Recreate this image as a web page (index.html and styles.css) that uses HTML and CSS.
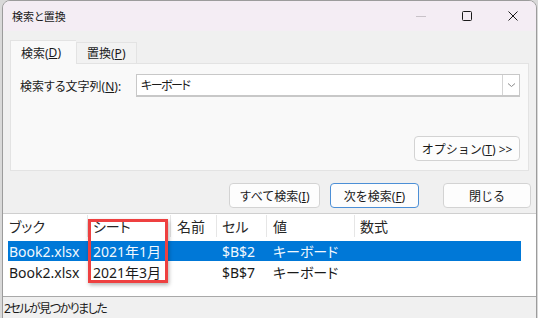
FILE: index.html
```html
<!DOCTYPE html>
<html lang="ja">

<head>
    <meta charset="UTF-8">
    <meta name="viewport" content="width=device-width, initial-scale=1.0">
    <title>検索と置換</title>
    <link rel="stylesheet" href="styles.css">
</head>

<body>

    <div class="window">
        <div class="titlebar">
            <span class="title">検索と置換</span>
            <div class="controls">
                <span class="ctl">
                    <svg width="12" height="12" viewBox="0 0 12 12"><path d="M1 6.5h10" stroke="#c8c2c8" stroke-width="1" fill="none"/></svg>
                </span>
                <span class="ctl">
                    <svg width="12" height="12" viewBox="0 0 12 12"><rect x="1.5" y="1.5" width="9" height="9" rx="1" stroke="#1a1a1a" stroke-width="1" fill="none"/></svg>
                </span>
                <span class="ctl">
                    <svg width="12" height="12" viewBox="0 0 12 12"><path d="M1.5 1.5l9 9M10.5 1.5l-9 9" stroke="#1a1a1a" stroke-width="1" fill="none"/></svg>
                </span>
            </div>
        </div>

        <div class="dialog-body">
            <div class="tabs">
                <div class="tab tab-find active">検索(<u>D</u>)</div>
                <div class="tab tab-replace">置換(<u>P</u>)</div>
            </div>

            <div class="panel">
                <div class="find-row">
                    <span class="find-label">検索する文字列(<u>N</u>):</span>
                    <div class="combo">
                        <span class="combo-value">キーボード</span>
                        <span class="combo-btn">
                            <svg width="9" height="6" viewBox="0 0 9 6"><path d="M1 1.5l3.5 3 3.5-3" stroke="#8a8a8a" stroke-width="1" fill="none"/></svg>
                        </span>
                    </div>
                </div>
                <div class="options-row">
                    <button class="btn btn-options">オプション(<u>T</u>) &gt;&gt;</button>
                </div>
            </div>

            <div class="actions">
                <button class="btn btn-all">すべて検索(<u>I</u>)</button>
                <button class="btn btn-next is-default">次を検索(<u>F</u>)</button>
                <button class="btn btn-close">閉じる</button>
            </div>
        </div>

        <div class="results">
            <div class="list-row list-head">
                <span class="cell c-book">ブック</span>
                <span class="cell c-sheet">シート</span>
                <span class="cell c-name">名前</span>
                <span class="cell c-cell">セル</span>
                <span class="cell c-value">値</span>
                <span class="cell c-formula">数式</span>
            </div>
            <div class="list-row is-selected">
                <span class="cell c-book">Book2.xlsx</span>
                <span class="cell c-sheet">2021年1月</span>
                <span class="cell c-name"></span>
                <span class="cell c-cell">$B$2</span>
                <span class="cell c-value">キーボード</span>
                <span class="cell c-formula"></span>
            </div>
            <div class="list-row">
                <span class="cell c-book">Book2.xlsx</span>
                <span class="cell c-sheet">2021年3月</span>
                <span class="cell c-name"></span>
                <span class="cell c-cell">$B$7</span>
                <span class="cell c-value">キーボード</span>
                <span class="cell c-formula"></span>
            </div>

            <!-- highlight drawn over the sheet column -->
            <div class="mark-box"></div>
        </div>

        <div class="statusbar">2セルが見つかりました</div>
    </div>

</body>

</html>
```

FILE: styles.css
```css
/* --- Page --- */
body {
    margin: 0;
    background-color: #d9d9d9;
    font-family: "Noto Sans", "Noto Sans CJK JP", sans-serif;
    font-feature-settings: "palt";
    font-size: 12px;
    color: #1a1a1a;
    overflow: hidden;
}

.window {
    width: 533px;
    height: 330px;
    margin-left: 2px;
    border: 1px solid #9c9c9c;
    border-radius: 8px 8px 0 0;
    background: #f0f0f0;
    display: flex;
    flex-direction: column;
    overflow: hidden;
}

/* --- Title bar --- */
.titlebar {
    height: 30px;
    flex-shrink: 0;
    background: #f4edf4;
    display: flex;
    align-items: center;
    padding-left: 9px;
}

.title {
    flex: 1;
    font-size: 11px;
}

.controls {
    display: flex;
    height: 100%;
}

.ctl {
    width: 46px;
    display: flex;
    align-items: center;
    justify-content: center;
}

/* --- Dialog body --- */
.dialog-body {
    padding: 9px 5px 0 7px;
}

.tabs {
    display: flex;
    align-items: flex-end;
    height: 23px;
}

.tab {
    height: 21px;
    padding-left: 10px;
    box-sizing: border-box;
    display: flex;
    align-items: center;
    background: #f2f2f2;
    border: 1px solid #e3e3e3;
    border-bottom: none;
}

.tab-find {
    width: 66px;
}

.tab-replace {
    width: 61px;
}

.tab.active {
    height: 24px;
    background: #f9f9f9;
    margin-bottom: -1px;
    position: relative;
    border-right: none;
}

.panel {
    width: 519px;
    height: 108px;
    box-sizing: border-box;
    background: #f9f9f9;
    border: 1px solid #e3e3e3;
    padding: 10px 8px 9px 9px;
    display: flex;
    flex-direction: column;
    justify-content: space-between;
}

.find-row {
    display: flex;
    align-items: center;
}

.find-label {
    flex: 0 0 116px;
}

.combo {
    flex: 1;
    height: 23px;
    box-sizing: border-box;
    display: flex;
    background: #ffffff;
    border: 1px solid #c8c8c8;
    border-bottom-width: 2px;
}

.combo-value {
    flex: 1;
    padding-left: 4px;
    letter-spacing: -1.5px;
    display: flex;
    align-items: center;
}

.combo-btn {
    width: 16px;
    border-left: 1px solid #d4d4d4;
    display: flex;
    align-items: center;
    justify-content: center;
}

.options-row {
    display: flex;
    justify-content: flex-end;
}

/* --- Buttons --- */
.btn {
    height: 25px;
    padding: 0;
    font-family: inherit;
    font-size: 12px;
    color: #1a1a1a;
    background: #fdfdfd;
    border: 1px solid #d3d3d3;
    border-radius: 4px;
}

.btn-options {
    width: 106px;
}

.btn.is-default {
    border-color: #4c8fd6;
}

.actions {
    display: flex;
    justify-content: flex-end;
    margin-top: 12px;
}

.btn-all {
    width: 91px;
}

.btn-next {
    width: 89px;
    margin-left: 10px;
}

.btn-close {
    width: 88px;
    margin-left: 24px;
}

/* --- Results list --- */
.results {
    position: relative;
    height: 84px;
    flex-shrink: 0;
    margin-top: 5px;
    box-sizing: border-box;
    background: #ffffff;
    border-top: 1px solid #cfcfcf;
    border-bottom: 1px solid #a9a9a9;
    padding: 1px 0 0 5px;
    font-size: 14px;
}

.list-row {
    display: flex;
    width: 513px;
    height: 20px;
    align-items: center;
    margin-bottom: 1px;
}

.list-head {
    height: 22px;
    margin-bottom: 4px;
    color: #262626;
}

.list-head .cell {
    height: 100%;
    border-right: 1px solid #e6e6e6;
}

.list-head .c-formula {
    border-right: none;
}

.cell {
    box-sizing: border-box;
    padding-left: 5px;
    white-space: nowrap;
    display: flex;
    align-items: center;
}

.c-book { width: 80px; padding-left: 1px; }
.c-sheet { width: 83px; }
.c-name { width: 46px; padding-left: 6px; }
.c-cell { width: 50px; }
.c-value { width: 88px; padding-left: 6px; }
.c-formula { flex: 1; }

.list-row.is-selected {
    background: #0078d7;
    color: #f2f8fe;
}

.mark-box {
    position: absolute;
    left: 85px;
    top: 5px;
    width: 80px;
    height: 64px;
    box-sizing: border-box;
    border: 3px solid #ee4040;
    box-shadow: 1px 2px 4px rgba(0, 0, 0, 0.3);
}

/* --- Status bar --- */
.statusbar {
    height: 21px;
    padding-left: 1px;
    letter-spacing: -1.5px;
    display: flex;
    align-items: center;
    background: #f0f0f0;
}
```
